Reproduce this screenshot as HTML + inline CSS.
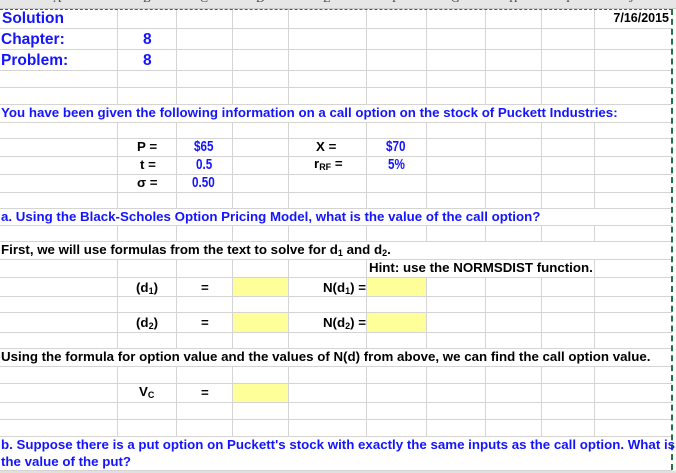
<!DOCTYPE html>
<html><head><meta charset="utf-8"><style>
*{margin:0;padding:0;box-sizing:border-box}
body{width:676px;height:473px;overflow:hidden;background:#fff;position:relative;font-family:"Liberation Sans",Arial,sans-serif;font-weight:bold;font-size:13.3px;color:#000}
.v{position:absolute;width:1px;background:#d4d4d4;top:9px;height:461px}
.h{position:absolute;height:1px;background:#d4d4d4;left:0;width:672px}
.w{position:absolute;background:#fff}
.t{position:absolute;white-space:nowrap}
.b{color:#1414ff}
.y{position:absolute;background:#ffff99}
sub{font-size:9px;vertical-align:-2px}
.n{font-size:15px;transform:scaleX(.78);transform-origin:left}
</style></head><body>
<div style="position:absolute;left:0;top:0;width:676px;height:9px;background:#e6e6e6;border-bottom:1px solid #c8c8c8;overflow:hidden;font-weight:normal;font-family:'Liberation Serif',serif;font-size:12px;color:#444">
<span class="t" style="left:53px;top:-9px">A</span><span class="t" style="left:143px;top:-9px">B</span><span class="t" style="left:200px;top:-9px">C</span><span class="t" style="left:256px;top:-9px">D</span><span class="t" style="left:323px;top:-9px">E</span><span class="t" style="left:392px;top:-9px">F</span><span class="t" style="left:451px;top:-9px">G</span><span class="t" style="left:509px;top:-9px">H</span><span class="t" style="left:566px;top:-9px">I</span><span class="t" style="left:629px;top:-9px">J</span>
</div>
<div class="v" style="left:117px"></div><div class="v" style="left:176px"></div><div class="v" style="left:232px"></div><div class="v" style="left:288px"></div><div class="v" style="left:366px"></div><div class="v" style="left:426px"></div><div class="v" style="left:485px"></div><div class="v" style="left:541px"></div><div class="v" style="left:594px"></div>
<div class="h" style="top:28px"></div><div class="h" style="top:49px"></div><div class="h" style="top:70px"></div><div class="h" style="top:87px"></div><div class="h" style="top:104px"></div><div class="h" style="top:122px"></div><div class="h" style="top:138px"></div><div class="h" style="top:156px"></div><div class="h" style="top:174px"></div><div class="h" style="top:192px"></div><div class="h" style="top:208px"></div><div class="h" style="top:225px"></div><div class="h" style="top:241px"></div><div class="h" style="top:259px"></div><div class="h" style="top:277px"></div><div class="h" style="top:296px"></div><div class="h" style="top:312px"></div><div class="h" style="top:332px"></div><div class="h" style="top:348px"></div><div class="h" style="top:366px"></div><div class="h" style="top:383px"></div><div class="h" style="top:402px"></div><div class="h" style="top:419px"></div><div class="h" style="top:436px"></div><div class="h" style="top:470px"></div>
<div class="w" style="left:0;top:105px;width:672px;height:17px"></div>
<div class="w" style="left:0;top:209px;width:672px;height:16px"></div>
<div class="w" style="left:0;top:242px;width:672px;height:17px"></div>
<div class="w" style="left:367px;top:260px;width:227px;height:17px"></div>
<div class="w" style="left:0;top:349px;width:672px;height:17px"></div>
<div class="w" style="left:0;top:437px;width:672px;height:33px"></div>
<div style="position:absolute;left:0;top:9px;width:672px;border-top:1px dashed #217346"></div>
<div style="position:absolute;left:671px;top:9px;height:461px;border-left:2px dashed #217346"></div>
<div class="y" style="left:233px;top:278px;width:55px;height:18px"></div>
<div class="y" style="left:367px;top:278px;width:59px;height:18px"></div>
<div class="y" style="left:233px;top:313px;width:55px;height:19px"></div>
<div class="y" style="left:367px;top:313px;width:59px;height:19px"></div>
<div class="y" style="left:233px;top:384px;width:55px;height:18px"></div>

<div class="t b" style="left:2px;top:10px;font-size:15.5px">Solution</div>
<div class="t b" style="left:1px;top:31px;font-size:15.5px">Chapter:</div>
<div class="t b" style="left:143px;top:31px;font-size:15.5px">8</div>
<div class="t b" style="left:1px;top:52px;font-size:15.5px">Problem:</div>
<div class="t b" style="left:143px;top:52px;font-size:15.5px">8</div>
<div class="t" style="left:590px;top:11px;width:79px;text-align:right;font-size:12.5px">7/16/2015</div>
<div class="t b" style="left:1px;top:105px">You have been given the following information on a call option on the stock of Puckett Industries:</div>
<div class="t" style="left:137px;top:139px">P =</div>
<div class="t b n" style="left:194px;top:138px">$65</div>
<div class="t" style="left:140px;top:157px">t =</div>
<div class="t b n" style="left:196px;top:156px">0.5</div>
<div class="t" style="left:137px;top:175px">σ =</div>
<div class="t b n" style="left:192px;top:174px">0.50</div>
<div class="t" style="left:316px;top:139px">X =</div>
<div class="t b n" style="left:386px;top:138px">$70</div>
<div class="t" style="left:314px;top:156px">r<sub>RF</sub> =</div>
<div class="t b n" style="left:388px;top:156px">5%</div>
<div class="t b" style="left:1px;top:209px">a. Using the Black-Scholes Option Pricing Model, what is the value of the call option?</div>
<div class="t" style="left:1px;top:242px">First, we will use formulas from the text to solve for d<sub>1</sub> and d<sub>2</sub>.</div>
<div class="t" style="left:369px;top:260px">Hint: use the NORMSDIST function.</div>
<div class="t" style="left:136px;top:280px">(d<sub>1</sub>)</div>
<div class="t" style="left:201px;top:280px">=</div>
<div class="t" style="left:288px;top:280px;width:78px;text-align:right">N(d<sub>1</sub>) =</div>
<div class="t" style="left:136px;top:315px">(d<sub>2</sub>)</div>
<div class="t" style="left:201px;top:315px">=</div>
<div class="t" style="left:288px;top:315px;width:78px;text-align:right">N(d<sub>2</sub>) =</div>
<div class="t" style="left:1px;top:349px">Using the formula for option value and the values of N(d) from above, we can find the call option value.</div>
<div class="t" style="left:139px;top:384px">V<sub>C</sub></div>
<div class="t" style="left:201px;top:385px">=</div>
<div class="b" style="position:absolute;left:1px;top:436px;width:680px;line-height:17px;white-space:nowrap">b. Suppose there is a put option on Puckett's stock with exactly the same inputs as the call option. What is<br>the value of the put?</div>
<div style="position:absolute;left:0;top:471px;width:676px;height:2px;background:#e0e0e0"></div>
</body></html>
